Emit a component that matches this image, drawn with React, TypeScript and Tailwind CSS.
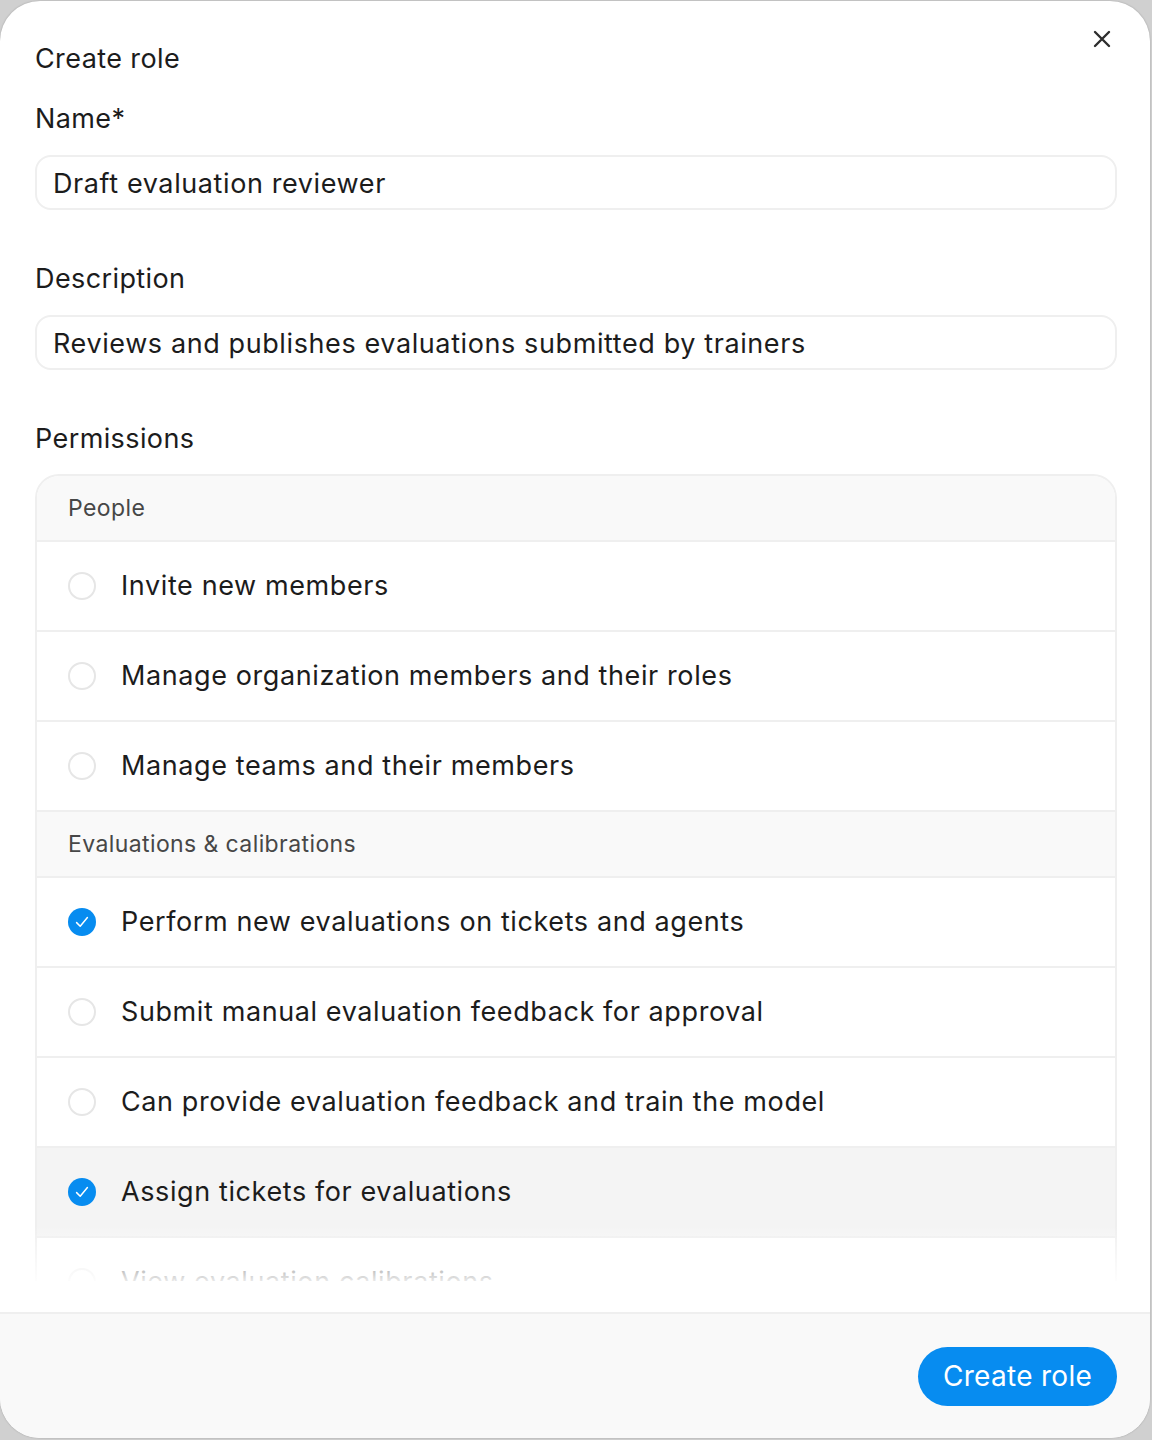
import React from "react";

type Perm = { label: string; checked?: boolean; hover?: boolean };
type Group = { title: string; items: Perm[] };

const groups: Group[] = [
  {
    title: "People",
    items: [
      { label: "Invite new members" },
      { label: "Manage organization members and their roles" },
      { label: "Manage teams and their members" },
    ],
  },
  {
    title: "Evaluations & calibrations",
    items: [
      { label: "Perform new evaluations on tickets and agents", checked: true },
      { label: "Submit manual evaluation feedback for approval" },
      { label: "Can provide evaluation feedback and train the model" },
      { label: "Assign tickets for evaluations", checked: true, hover: true },
      { label: "View evaluation calibrations" },
      { label: "Create and manage calibration sessions" },
    ],
  },
];

function Radio({ checked }: { checked?: boolean }) {
  if (checked) {
    return (
      <span className="flex h-[28px] w-[28px] shrink-0 items-center justify-center rounded-full bg-[#078cf0]">
        <svg width="28" height="28" viewBox="0 0 28 28" fill="none">
          <path d="M8.6 14.6 L12.2 18.2 L19.4 9.6" stroke="white" strokeWidth="1.5" strokeLinecap="round" strokeLinejoin="round" />
        </svg>
      </span>
    );
  }
  return <span className="h-[28px] w-[28px] shrink-0 rounded-full border-2 border-[#e6e6e6] bg-white" />;
}

function Field({ label, value }: { label: string; value: string }) {
  return (
    <div className="flex flex-col">
      <div className="text-[27px] leading-[36px] tracking-[0.4px] text-[#1c1c1c]">{label}</div>
      <div className="mt-[18px] flex h-[55px] items-center rounded-[16px] border-2 border-[#efefef] px-[16px] pt-[4px] text-[27px] tracking-[0.6px] text-[#1c1c1c]">
        {value}
      </div>
    </div>
  );
}

export default function App() {
  return (
    <div
      className="h-[1440px] w-[1152px] bg-[#d0d0d0] pt-[1px]"
      style={{ fontFamily: "Inter, 'Noto Sans', sans-serif" }}
    >
      <div className="flex h-[1437px] w-[1150px] flex-col overflow-hidden rounded-[40px] bg-white shadow-[0_0_2px_rgba(0,0,0,0.25)]">
        <div className="relative h-[1311px] shrink-0">
          <button className="absolute right-[37px] top-[27px] flex h-[22px] w-[22px] items-center justify-center text-[#2e2e2e]">
            <svg width="20" height="20" viewBox="0 0 20 20" fill="none">
              <path d="M3 3 L17 17 M17 3 L3 17" stroke="currentColor" strokeWidth="2.4" strokeLinecap="round" />
            </svg>
          </button>

          <div className="relative h-[1280px] overflow-hidden pl-[35px] pr-[33px] pt-[40px]">
            <div className="text-[27px] leading-[36px] tracking-[0.4px] text-[#1c1c1c]">Create role</div>

            <div className="mt-[24px]">
              <Field label="Name*" value="Draft evaluation reviewer" />
            </div>
            <div className="mt-[51px]">
              <Field label="Description" value="Reviews and publishes evaluations submitted by trainers" />
            </div>

            <div className="mt-[51px] text-[27px] leading-[36px] tracking-[0.4px] text-[#1c1c1c]">Permissions</div>

            <div className="mt-[17px] overflow-hidden rounded-t-[24px] border-2 border-b-0 border-[#efefef]">
              {groups.map((g, gi) => (
                <div key={g.title}>
                  <div
                    className={`flex items-center bg-[#f9f9f9] pl-[31px] text-[23px] tracking-[0.4px] text-[#474747] ${
                      gi > 0 ? "h-[66px] border-t-2 border-[#efefef]" : "h-[64px]"
                    }`}
                  >
                    {g.title}
                  </div>
                  {g.items.map((p) => (
                    <div
                      key={p.label}
                      className={`flex h-[90px] items-center gap-[25px] border-t-2 border-[#efefef] pl-[31px] text-[27px] tracking-[0.6px] text-[#1c1c1c] ${
                        p.hover ? "bg-[#f4f4f4]" : "bg-white"
                      }`}
                    >
                      <Radio checked={p.checked} />
                      <span>{p.label}</span>
                    </div>
                  ))}
                </div>
              ))}
            </div>

            <div className="pointer-events-none absolute inset-x-0 bottom-0 h-[56px] bg-gradient-to-b from-white/0 to-white/90" />
          </div>
        </div>

        <div className="flex flex-1 items-center justify-end border-t-2 border-[#efefef] bg-[#f9f9f9] pr-[33px]">
          <button className="flex h-[59px] w-[199px] items-center justify-center rounded-full bg-[#078cf0] text-[28px] tracking-[0.3px] text-white">
            Create role
          </button>
        </div>
      </div>
    </div>
  );
}
